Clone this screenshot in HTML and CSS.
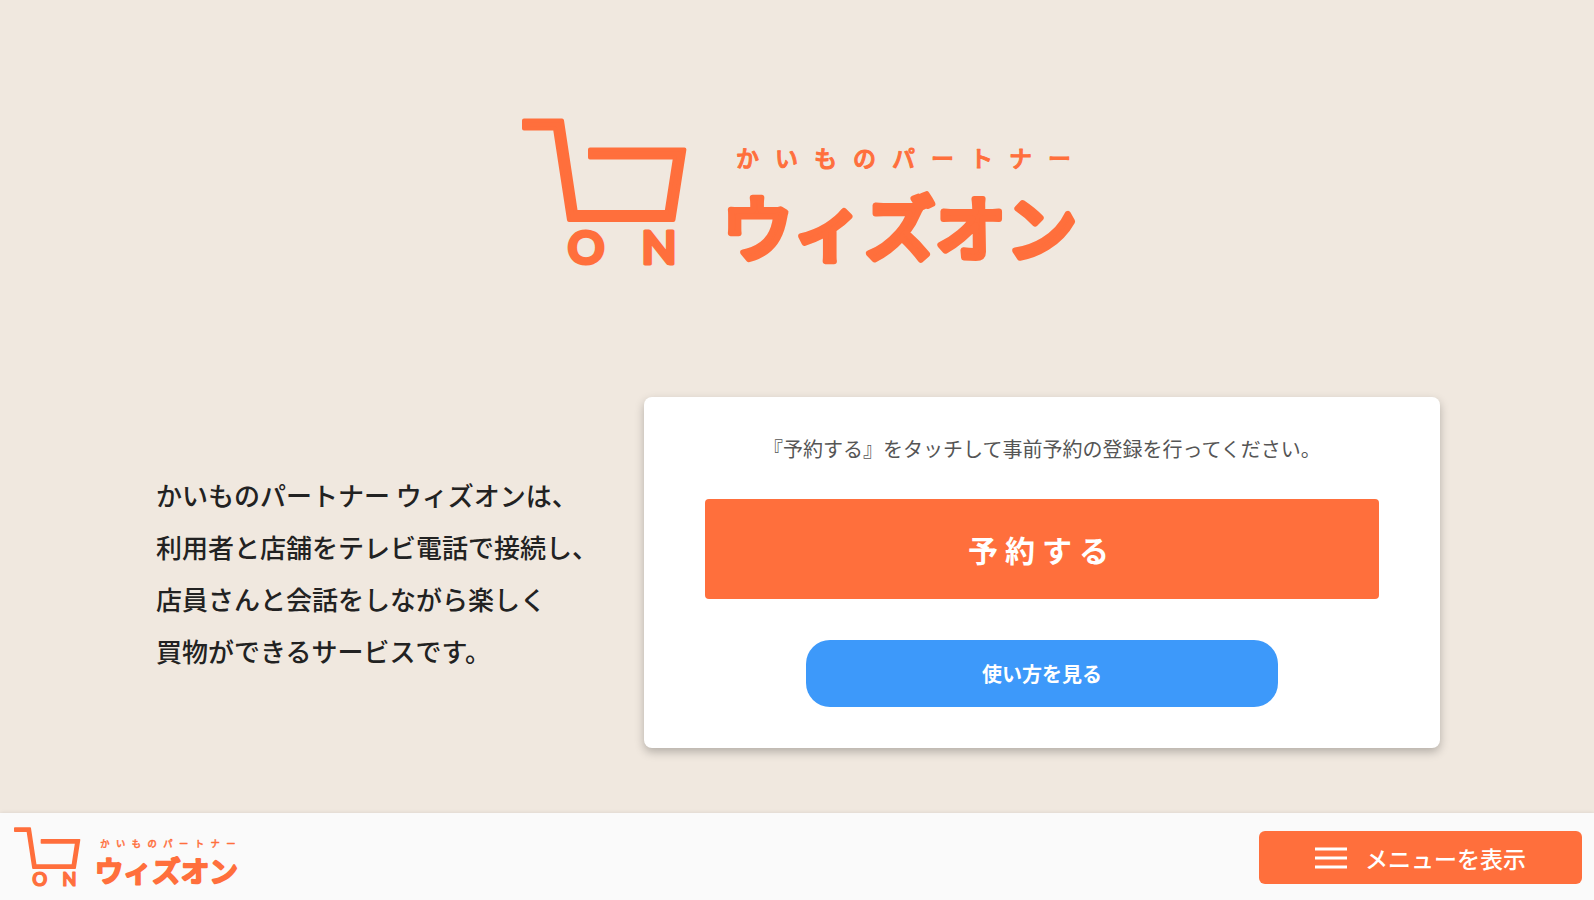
FILE: index.html
```html
<!DOCTYPE html>
<html lang="ja">
<head>
  <meta charset="UTF-8" />
  <meta name="viewport" content="width=device-width, initial-scale=1.0" />
  <title>かいものパートナー ウィズオン</title>
  <link rel="stylesheet" href="styles.css">
</head>
<body>
  <main class="main">
    <h1 class="hero">
      <svg class="logo" viewBox="0 0 550 150">
        <path class="logo-cart" d="M2 2.5H40L53.8 94H144.6L153 39.5H68V31.5H162.4L151.4 102H47L33 10.5H2Z" />
        <text class="logo-on" x="64" y="146">O</text>
        <text class="logo-on" x="137" y="146">N</text>
        <text class="logo-sub" x="214" y="49">かいものパートナー</text>
        <text class="logo-name" x="200" y="137">ウィズオン</text>
      </svg>
    </h1>

    <div class="content">
      <p class="lead">
        かいものパートナー ウィズオンは、<br>
        利用者と店舗をテレビ電話で接続し、<br>
        店員さんと会話をしながら楽しく<br>
        買物ができるサービスです。
      </p>
      <div class="card">
        <p class="card-text">『予約する』をタッチして事前予約の登録を行ってください。</p>
        <button type="button" class="btn btn-reserve">予約する</button>
        <button type="button" class="btn btn-howto">使い方を見る</button>
      </div>
    </div>
  </main>

  <footer class="footer">
    <a href="#" class="footer-logo">
      <svg class="logo" viewBox="0 0 550 150">
        <path class="logo-cart" d="M2 2.5H40L53.8 94H144.6L153 39.5H68V31.5H162.4L151.4 102H47L33 10.5H2Z" />
        <text class="logo-on" x="64" y="146">O</text>
        <text class="logo-on" x="137" y="146">N</text>
        <text class="logo-sub" x="214" y="49">かいものパートナー</text>
        <text class="logo-name" x="200" y="137">ウィズオン</text>
      </svg>
    </a>
    <button type="button" class="btn btn-menu">
      <svg class="menu-icon" viewBox="0 0 32 24">
        <path d="M0 3H32M0 12H32M0 21H32" />
      </svg>
      メニューを表示
    </button>
  </footer>
</body>
</html>
```
FILE: styles.css
```css
:root {
  --bg-color: #f0e8df;
  --orange: #ff6f3c;
  --blue: #3d99fa;
}

* {
  box-sizing: border-box;
}

body {
  margin: 0;
  min-height: 100vh;
  display: flex;
  flex-direction: column;
  font-family: "Noto Sans CJK JP", "Noto Sans", sans-serif;
  background: var(--bg-color);
  color: #222;
}

h1, p {
  margin: 0;
}

.main {
  flex: 1;
}

/* logo */
.logo {
  display: block;
  width: 100%;
  overflow: visible;
  fill: var(--orange);
  stroke: var(--orange);
  stroke-linejoin: round;
}
.logo-cart {
  stroke-width: 4;
}
.logo-on {
  font: 700 46px Lato, sans-serif;
  text-anchor: middle;
  stroke-width: 3;
}
.logo-sub {
  font-size: 23px;
  font-weight: 500;
  letter-spacing: 16px;
  stroke-width: 1;
}
.logo-name {
  font-size: 71px;
  font-weight: 500;
  stroke-width: 6;
}

.hero {
  width: 550px;
  max-width: 90%;
  margin: 0 auto;
  padding: 118px 0 129px;
}

.content {
  display: flex;
  align-items: center;
  padding: 0 154px 64px 156px;
}
.lead {
  flex: 1;
  font-size: 26px;
  font-weight: 500;
  line-height: 52px;
  white-space: nowrap;
}

.card {
  flex: 0 0 62%;
  display: flex;
  flex-direction: column;
  align-items: center;
  padding: 37px 61px 41px;
  background: #fff;
  border-radius: 8px;
  box-shadow: 0 4px 10px rgba(0,0,0,0.25);
}
.card-text {
  margin-bottom: 35px;
  font-size: 20px;
  line-height: 30px;
  color: #555;
}

.btn {
  border: none;
  font-family: inherit;
  color: #fff;
  cursor: pointer;
}
.btn-reserve {
  width: 100%;
  height: 100px;
  margin-bottom: 41px;
  border-radius: 4px;
  background: var(--orange);
  font-size: 30px;
  font-weight: 700;
  letter-spacing: 7px;
}
.btn-howto {
  width: 70%;
  height: 67px;
  border-radius: 24px;
  background: var(--blue);
  font-size: 20px;
  font-weight: 700;
}

.footer {
  display: flex;
  justify-content: space-between;
  align-items: center;
  height: 87px;
  padding: 2px 12px 0 14px;
  background: #fafafa;
  box-shadow: 0 0 4px rgba(0,0,0,0.1);
}
.footer-logo {
  width: 222px;
}
.btn-menu {
  display: flex;
  justify-content: center;
  align-items: center;
  gap: 18px;
  width: 323px;
  height: 53px;
  border-radius: 6px;
  background: var(--orange);
  font-size: 23px;
  font-weight: 500;
}
.menu-icon {
  width: 32px;
  stroke: #fff;
  stroke-width: 3;
}
```
